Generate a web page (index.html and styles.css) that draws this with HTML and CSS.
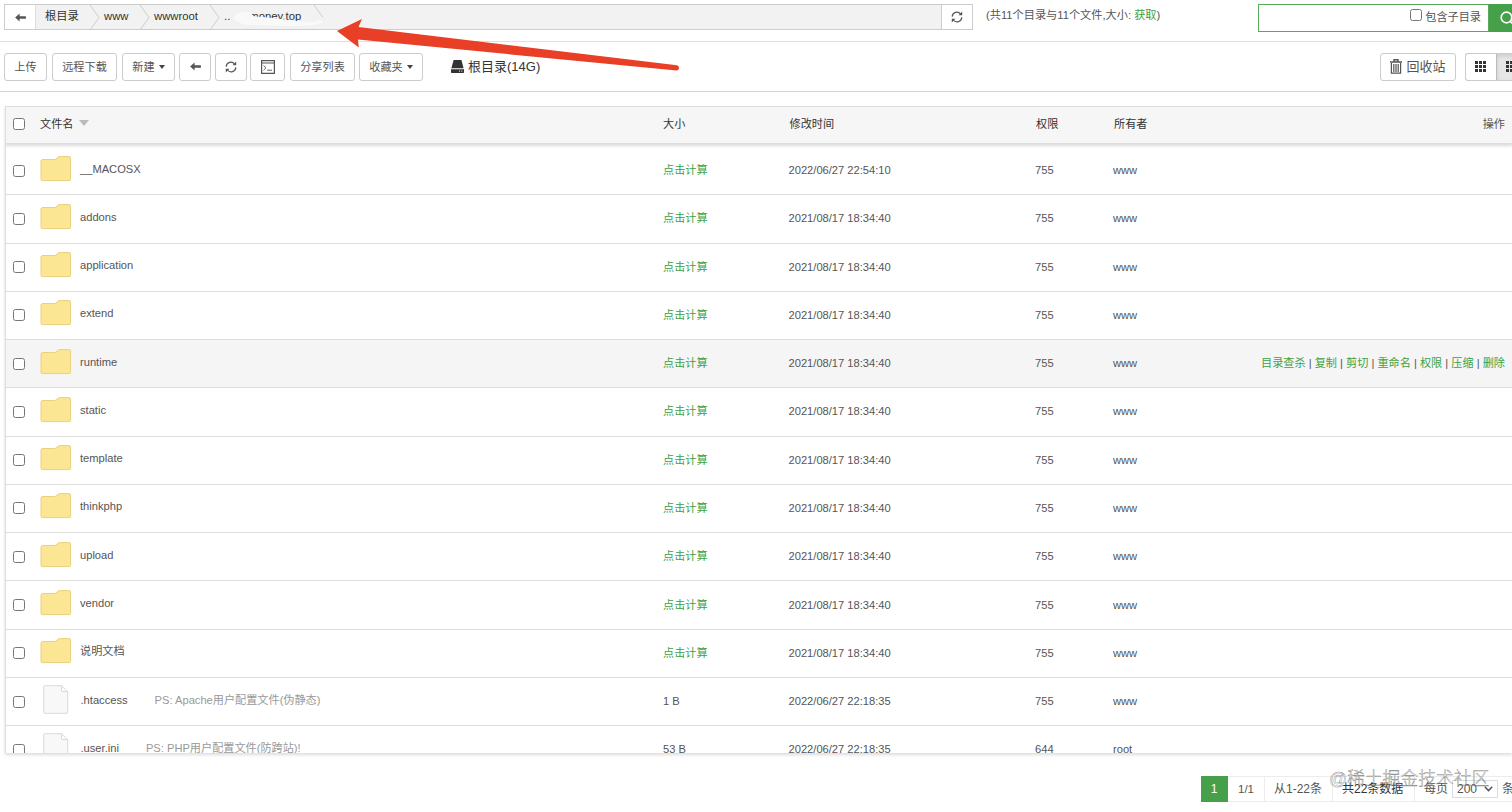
FILE: index.html
```
<!DOCTYPE html>
<html lang="zh-CN">
<head>
  <meta charset="UTF-8">
  <meta name="viewport" content="width=device-width, initial-scale=1.0">
  <title>文件</title>
  <link rel="stylesheet" href="styles.css">
</head>
<body>
  <!-- Icons -->
  <svg class="sprite" width="0" height="0">
    <symbol id="i-left" viewBox="0 0 12 10"><path d="M0 5 5 .6V3.6H12V6.4H5V9.4z"/></symbol>
    <symbol id="i-refresh" viewBox="0 0 12 12"><path d="M1.2 5.6A4.7 4.7 0 0 1 9.6 3M10.8 6.4A4.7 4.7 0 0 1 2.4 9" fill="none" stroke="currentColor" stroke-width="1.2"/><path d="M11.2.6V4.2H7.6zM.8 11.4V7.8H4.4z"/></symbol>
    <symbol id="i-folder" viewBox="0 0 32 26"><path d="M1 5.2Q1 3.5 2.6 3.5H14.6Q16 3.4 17 2.2 18.2.6 19.6.6H29.2Q30.6.6 30.6 2V23.4Q30.6 24.6 29.2 24.6H2.4Q1 24.6 1 23.2z" fill="#fbe694" stroke="#ebcf7c"/></symbol>
    <symbol id="i-file" viewBox="0 0 26 29"><path d="M.7 2Q.7.7 2 .7H18.5L24.7 6.6V27Q24.7 28.3 23.4 28.3H2Q.7 28.3.7 27z" fill="#f8f8f8" stroke="#d9d9d9"/><path d="M18.5.7V5.4Q18.5 6.6 19.8 6.6H24.7z" fill="#fff" stroke="#d9d9d9"/></symbol>
    <symbol id="i-grid" viewBox="0 0 11 11"><path d="M0 0h3v3H0zM4 0h3v3H4zM8 0h3v3H8zM0 4h3v3H0zM4 4h3v3H4zM8 4h3v3H8zM0 8h3v3H0zM4 8h3v3H4zM8 8h3v3H8z"/></symbol>
  </svg>

  <!-- Path bar -->
  <div class="path-bar">
    <div class="path-input">
      <div class="path-back"><svg width="11" height="9"><use href="#i-left"/></svg></div>
      <ul class="crumbs">
        <li class="c-root">根目录<svg class="sep" width="11" height="25" viewBox="0 0 11 25"><path d="M1 0 10 12.5 1 25"/></svg></li>
        <li class="c-www">www<svg class="sep" width="11" height="25" viewBox="0 0 11 25"><path d="M1 0 10 12.5 1 25"/></svg></li>
        <li class="c-wwwroot">wwwroot<svg class="sep" width="11" height="25" viewBox="0 0 11 25"><path d="M1 0 10 12.5 1 25"/></svg></li>
        <li class="c-site">..<span class="site-name">money.top</span><svg class="sep" width="11" height="25" viewBox="0 0 11 25"><path d="M1 0 10 12.5"/></svg>
          <svg class="smudge" width="94" height="17" viewBox="0 0 94 17"><path d="M4 8Q6 3 12 1.5L20 1Q23 3 25 5.2L36 6.2Q48 7.2 58 8.8 66 10.6 84 11L92 9 94 12Q78 16 62 15L20 14Q12 13 8 10z"/></svg>
        </li>
      </ul>
      <div class="path-refresh"><svg width="12" height="12"><use href="#i-refresh"/></svg></div>
    </div>
    <div class="path-info">(共11个目录与11个文件,大小: <a class="link">获取</a>)</div>
    <div class="search">
      <label class="search-box"><input type="checkbox" class="check">包含子目录</label>
      <div class="search-btn"><svg class="line" width="16" height="16" viewBox="0 0 16 16"><circle cx="6.5" cy="6.5" r="5.3"/><path d="M10.3 10.3 15 15"/></svg></div>
    </div>
  </div>

  <!-- Toolbar -->
  <div class="toolbar">
    <div class="btn w43">上传</div>
    <div class="btn w65">远程下载</div>
    <div class="btn w53">新建<i class="caret"></i></div>
    <div class="btn w32"><svg width="11" height="9"><use href="#i-left"/></svg></div>
    <div class="btn w32"><svg width="12" height="12"><use href="#i-refresh"/></svg></div>
    <div class="btn w35"><svg class="line" width="14" height="14" viewBox="0 0 14 14"><path d="M.6.6H13.4V13.4H.6zM.6 3H13.4" stroke-width="1.2"/><path d="M2.5 5.5 5 7.8 2.5 10.2M6 10.2H11" stroke-width=".9"/></svg></div>
    <div class="btn w65 share">分享列表</div>
    <div class="btn w64">收藏夹<i class="caret"></i></div>
    <div class="disk">
      <svg width="13" height="13" viewBox="0 0 13 13"><path d="M2.6 0H10.4L12.6 8.2H.4zM0 9.2H13V12.2Q13 13 12.2 13H.8Q0 13 0 12.2z"/><path d="M8 11.1H9M10.3 11.1H11.3" stroke="#fff"/></svg>
      根目录(14G)
    </div>
    <div class="btn recycle">
      <svg class="line" width="12" height="15" viewBox="0 0 12 15"><path d="M0 3H12M4 2.8V.8H8V2.8" stroke-width="1.4"/><path d="M1.4 4V14.2H10.6V4M3.8 5V13M6 5V13M8.2 5V13" stroke-width="1.2"/></svg>
      回收站
    </div>
    <div class="views">
      <div class="view"><svg width="11" height="11"><use href="#i-grid"/></svg></div>
      <div class="view active"><svg width="11" height="11"><use href="#i-grid"/></svg></div>
    </div>
  </div>

  <!-- File table -->
  <div class="files">
    <div class="row head">
      <input type="checkbox" class="check">
      <div>文件名<i class="sort"></i></div><div>大小</div><div>修改时间</div><div>权限</div><div>所有者</div><div class="ops">操作</div>
    </div>
    <div class="rows">
      <div class="row"><input type="checkbox" class="check"><div class="name"><svg class="folder"><use href="#i-folder"/></svg>__MACOSX</div><a class="link">点击计算</a><div>2022/06/27 22:54:10</div><div>755</div><div>www</div></div>
      <div class="row"><input type="checkbox" class="check"><div class="name"><svg class="folder"><use href="#i-folder"/></svg>addons</div><a class="link">点击计算</a><div>2021/08/17 18:34:40</div><div>755</div><div>www</div></div>
      <div class="row"><input type="checkbox" class="check"><div class="name"><svg class="folder"><use href="#i-folder"/></svg>application</div><a class="link">点击计算</a><div>2021/08/17 18:34:40</div><div>755</div><div>www</div></div>
      <div class="row"><input type="checkbox" class="check"><div class="name"><svg class="folder"><use href="#i-folder"/></svg>extend</div><a class="link">点击计算</a><div>2021/08/17 18:34:40</div><div>755</div><div>www</div></div>
      <div class="row hover"><input type="checkbox" class="check"><div class="name"><svg class="folder"><use href="#i-folder"/></svg>runtime</div><a class="link">点击计算</a><div>2021/08/17 18:34:40</div><div>755</div><div>www</div>
        <div class="ops"><a class="link">目录查杀</a> | <a class="link">复制</a> | <a class="link">剪切</a> | <a class="link">重命名</a> | <a class="link">权限</a> | <a class="link">压缩</a> | <a class="link">删除</a></div></div>
      <div class="row"><input type="checkbox" class="check"><div class="name"><svg class="folder"><use href="#i-folder"/></svg>static</div><a class="link">点击计算</a><div>2021/08/17 18:34:40</div><div>755</div><div>www</div></div>
      <div class="row"><input type="checkbox" class="check"><div class="name"><svg class="folder"><use href="#i-folder"/></svg>template</div><a class="link">点击计算</a><div>2021/08/17 18:34:40</div><div>755</div><div>www</div></div>
      <div class="row"><input type="checkbox" class="check"><div class="name"><svg class="folder"><use href="#i-folder"/></svg>thinkphp</div><a class="link">点击计算</a><div>2021/08/17 18:34:40</div><div>755</div><div>www</div></div>
      <div class="row"><input type="checkbox" class="check"><div class="name"><svg class="folder"><use href="#i-folder"/></svg>upload</div><a class="link">点击计算</a><div>2021/08/17 18:34:40</div><div>755</div><div>www</div></div>
      <div class="row"><input type="checkbox" class="check"><div class="name"><svg class="folder"><use href="#i-folder"/></svg>vendor</div><a class="link">点击计算</a><div>2021/08/17 18:34:40</div><div>755</div><div>www</div></div>
      <div class="row"><input type="checkbox" class="check"><div class="name"><svg class="folder"><use href="#i-folder"/></svg>说明文档</div><a class="link">点击计算</a><div>2021/08/17 18:34:40</div><div>755</div><div>www</div></div>
      <div class="row"><input type="checkbox" class="check"><div class="name"><svg class="file"><use href="#i-file"/></svg>.htaccess<span class="ps">PS: Apache用户配置文件(伪静态)</span></div><div>1 B</div><div>2022/06/27 22:18:35</div><div>755</div><div>www</div></div>
      <div class="row"><input type="checkbox" class="check"><div class="name"><svg class="file"><use href="#i-file"/></svg>.user.ini<span class="ps">PS: PHP用户配置文件(防跨站)!</span></div><div>53 B</div><div>2022/06/27 22:18:35</div><div>644</div><div>root</div></div>
    </div>
  </div>

  <!-- Paging -->
  <div class="pages">
    <span class="page current">1</span>
    <span class="page p-num">1/1</span>
    <span class="page p-range">从1-22条</span>
    <span class="page p-total">共22条数据</span>
    <span class="page p-size">每页
      <span class="select">200<svg class="line" width="9" height="6" viewBox="0 0 9 6"><path d="M.8.8 4.5 4.6 8.2.8" stroke-width="1.5"/></svg></span>
      条</span>
  </div>

  <svg class="arrow" width="344" height="56" viewBox="0 0 344 56"><path d="M1 14 26 2 22.5 10 341 48.3A2.7 2.7 0 0 1 340.5 53.6L22 22.5 22.8 30.5z"/></svg>
  <div class="watermark">@稀土掘金技术社区</div>
</body>
</html>
```
FILE: styles.css
```
/* General */
* {
  box-sizing: border-box;
}
body {
  margin: 0;
  width: 1512px;
  height: 812px;
  position: relative;
  overflow: hidden;
  background: #fff;
  color: #555;
  font-family: "Liberation Sans", "Noto Sans CJK SC", sans-serif;
  font-size: 11.15px;
  line-height: 16px;
  white-space: nowrap;
}
svg {
  fill: currentColor;
  flex: none;
}
.line {
  fill: none;
  stroke: currentColor;
}
.sprite {
  position: absolute;
}
.link {
  color: #3da142;
}
.check {
  appearance: none;
  width: 12px;
  height: 12px;
  margin: 0;
  flex: none;
  border: 1px solid #767676;
  border-radius: 2.5px;
  background: #fff;
}

/* Path bar */
.path-bar {
  display: flex;
  align-items: flex-start;
  height: 42px;
  padding: 4px 0 0 4px;
  border-bottom: 1px solid #e0e0e0;
}
.path-input {
  display: flex;
  width: 969px;
  height: 26px;
  border: 1px solid #ccc;
  background: #f2f2f2;
}
.path-back, .path-refresh {
  display: flex;
  align-items: center;
  justify-content: center;
  width: 31px;
  background: #fff;
}
.path-back {
  border-right: 1px solid #ddd;
}
.path-refresh {
  border-left: 1px solid #ccc;
}
.crumbs {
  display: flex;
  flex: 1;
  margin: 0;
  padding: 0;
  list-style: none;
  color: #333;
  font-size: 11.3px;
  line-height: 23px;
}
.crumbs li {
  position: relative;
  padding-left: 9px;
}
.c-root {
  width: 59px;
}
.crumbs .c-www {
  width: 50px;
}
.crumbs .c-wwwroot {
  width: 70px;
}
.crumbs .c-site {
  width: 104px;
}
.sep {
  position: absolute;
  right: -1px;
  top: 0;
  fill: none;
  stroke: #ccc;
}
.crumbs .sep {
  right: -5px;
}
.site-name {
  margin-left: 19px;
}
.smudge {
  position: absolute;
  left: 14px;
  top: 6px;
  fill: #f9f9f9;
}
.path-info {
  margin: 3px 0 0 13px;
  font-size: 11.2px;
}
.search {
  display: flex;
  margin-left: auto;
  width: 254px;
  height: 28px;
}
.search-box {
  display: flex;
  width: 231px;
  padding: 4px 7px 0 0;
  justify-content: flex-end;
  gap: 3px;
  border: 1px solid #56aa59;
}
.search-btn {
  flex: 1;
  overflow: hidden;
  padding: 7px 0 0 11px;
  background: #45a049;
  color: #fff;
  stroke-width: 1.7;
}

/* Toolbar */
.toolbar {
  display: flex;
  align-items: center;
  height: 50px;
  padding-left: 4px;
  border-bottom: 1px solid #d2d2d2;
}
.btn {
  display: flex;
  align-items: center;
  justify-content: center;
  flex: none;
  height: 28px;
  margin-right: 5px;
  border: 1px solid #ccc;
  border-radius: 3px;
}
.w43 { width: 43px; }
.w65 { width: 65px; }
.w53 { width: 53px; margin-right: 4px; }
.w32 { width: 32px; margin-right: 3.5px; }
.w35 { width: 35px; }
.share { margin-right: 4px; }
.w64 { width: 64px; }
.caret {
  margin-left: 4px;
  border: 3.5px solid transparent;
  border-top: 4px solid #444;
  border-bottom: 0;
}
.disk {
  display: flex;
  align-items: center;
  gap: 4px;
  margin-left: 23px;
  font-size: 13px;
  color: #333;
}
.recycle {
  width: 76px;
  margin-left: auto;
  margin-right: 9px;
  gap: 4px;
  font-size: 13px;
}
.views {
  display: flex;
  width: 47px;
  height: 28px;
  overflow: hidden;
  border: 1px solid #ccc;
  border-right: 0;
  border-radius: 3px 0 0 3px;
  color: #333;
}
.view {
  display: flex;
  align-items: center;
  flex: none;
  width: 30px;
  padding-left: 9px;
}
.view.active {
  width: 31px;
  border-left: 1px solid #bbb;
  background: #e6e6e6;
  box-shadow: inset 0 2px 4px rgba(0, 0, 0, .12);
}

/* File table */
.files {
  height: 647px;
  margin: 14px 0 0 5px;
  overflow: hidden;
  border-top: 1px solid #ddd;
  border-left: 1px solid #ddd;
  box-shadow: 0 2px 3px #ddd;
}
.row {
  display: grid;
  grid-template-columns: 34px 623px 125.5px 246.5px 78px 1fr;
  align-items: center;
  height: 48.27px;
  border-bottom: 1px solid #ddd;
}
.row .check {
  margin: 0 0 0 7px;
}
.head {
  grid-template-columns: 34px 623px 126.5px 246.5px 78px 1fr auto;
  height: 36px;
  padding-bottom: 2px;
  border: 0;
  background: #f6f6f6;
  color: #333;
  box-shadow: 0 2px 3px 1px #dcdcdc;
  position: relative;
}
.row.hover {
  grid-template-columns: 34px 623px 125.5px 246.5px 78px 1fr auto;
  background: #f5f5f5;
}
.ops {
  grid-column: 7;
  padding-right: 7px;
  color: #555;
}
.rows {
  padding-top: 4px;
}
.rows .row > div:not(.name), .rows .row > .link {
  padding-bottom: 1px;
}
.name {
  display: flex;
  align-items: center;
  padding-bottom: 4px;
}
.folder {
  width: 32px;
  height: 26px;
  margin-right: 8px;
}
.file {
  width: 26px;
  height: 29px;
  margin: 0 12px 0 2.5px;
}
.ps {
  margin-left: 27px;
  color: #999;
}
.sort {
  display: inline-block;
  margin-left: 6px;
  vertical-align: 2px;
  border: 5px solid transparent;
  border-top: 6px solid #bbb;
  border-bottom: 0;
}

/* Paging */
.pages {
  display: flex;
  width: 330px;
  height: 26px;
  margin: 23px 0 0 1201px;
  font-size: 12px;
  line-height: 25px;
}
.page {
  flex: none;
  border: 1px solid #ececec;
  border-left: 0;
}
.page.current {
  width: 27px;
  border-color: #45a049;
  background: #45a049;
  color: #fff;
  text-align: center;
}
.p-num {
  width: 37px;
  padding-left: 10px;
  font-size: 11.5px;
}
.p-range {
  width: 68px;
  padding-left: 9px;
}
.p-total {
  width: 82px;
  padding-left: 9px;
  color: #333;
}
.p-size {
  display: flex;
  gap: 4px;
  width: 115px;
  padding-left: 9px;
}
.select {
  display: flex;
  align-items: center;
  justify-content: space-between;
  width: 46px;
  height: 18px;
  margin-top: 3px;
  padding: 0 4px;
  border: 1px solid #ddd;
}

/* Overlays */
.arrow {
  position: absolute;
  left: 336px;
  top: 17px;
  fill: #e83f26;
}
.watermark {
  position: absolute;
  left: 1329px;
  top: 767px;
  font-size: 17.8px;
  font-weight: 300;
  line-height: 24px;
  color: rgba(255, 255, 255, .3);
  -webkit-text-stroke: .4px rgba(90, 90, 90, .8);
}
```
